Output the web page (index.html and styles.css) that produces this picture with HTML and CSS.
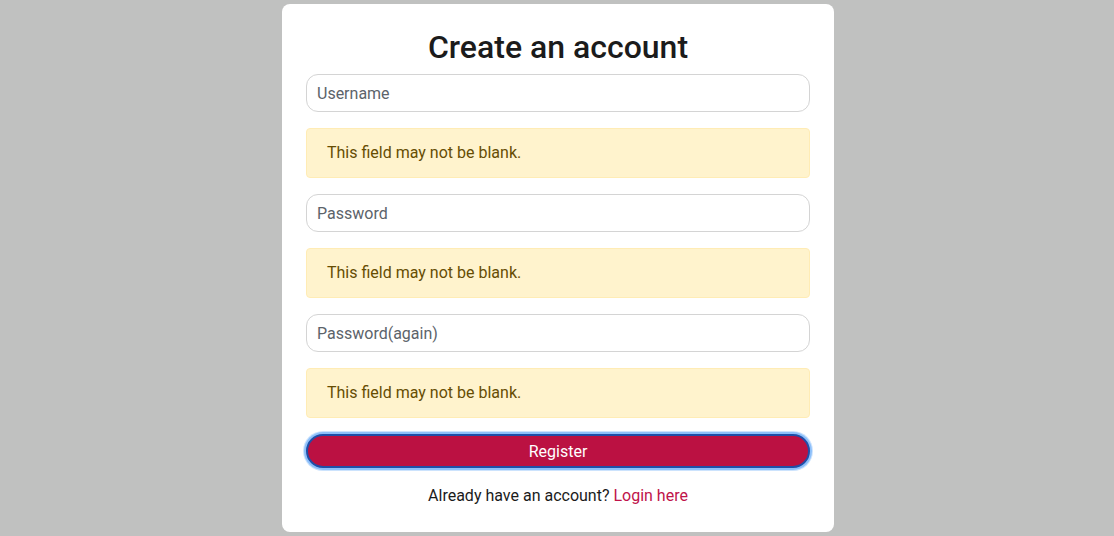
FILE: index.html
```html
<!DOCTYPE html>
<html lang="en">
<head>
<meta charset="utf-8">
<title>Create an account</title>
<link rel="stylesheet" href="styles.css">
</head>
<body>
<main class="page">
  <form class="card">
    <h1 class="title">Create an account</h1>
    <input class="field" type="text" placeholder="Username">
    <div class="alert">This field may not be blank.</div>
    <input class="field" type="password" placeholder="Password">
    <div class="alert">This field may not be blank.</div>
    <input class="field" type="password" placeholder="Password(again)">
    <div class="alert">This field may not be blank.</div>
    <button class="btn" type="button">Register</button>
    <p class="footer">Already have an account? <a class="link" href="#">Login here</a></p>
  </form>
</main>
</body>
</html>
```

FILE: styles.css
```css
* { box-sizing: border-box; }
html, body { margin: 0; padding: 0; }
body {
  background: #c0c1c0;
  font-family: Roboto, "Liberation Sans", sans-serif;
  color: #212529;
  font-size: 16px;
}
.page {
  display: flex;
  justify-content: center;
  padding: 4px 0 0 2px;
}
.card {
  width: 552px;
  height: 528px;
  background: #fff;
  border-radius: 8px;
  padding: 24px 24px;
  display: flex;
  flex-direction: column;
}
.title {
  margin: 0 0 8px;
  text-align: center;
  font-size: 32px;
  font-weight: 500;
  line-height: 38px;
  color: #1b1b1b;
}
.field {
  height: 38px;
  width: 100%;
  border: 1px solid #d4d4d4;
  border-radius: 12px;
  padding: 0 10px;
  font-family: inherit;
  font-size: 16px;
  color: #212529;
  background: #fff;
  margin: 0 0 16px;
}
.field::placeholder { color: #5c636a; }
.alert {
  height: 50px;
  background: #fff3cd;
  border: 1px solid #ffecb5;
  border-radius: 4px;
  color: #664d03;
  padding: 0 20px 1px;
  display: flex;
  align-items: center;
  margin: 0 0 16px;
}
.btn {
  height: 34px;
  width: 100%;
  background: #bb1142;
  color: #fff;
  border: 2px solid #1f4fa8;
  border-radius: 17px;
  box-shadow: 0 0 0 2px #8ec0fa, 0 0 0 3px rgba(142, 192, 250, 0.45);
  font-family: inherit;
  font-size: 16px;
  cursor: pointer;
}
.footer {
  margin: 16px 0 0;
  text-align: center;
  line-height: 24px;
  color: #1b1b1b;
}
.link { color: #c0134a; text-decoration: none; }
```
